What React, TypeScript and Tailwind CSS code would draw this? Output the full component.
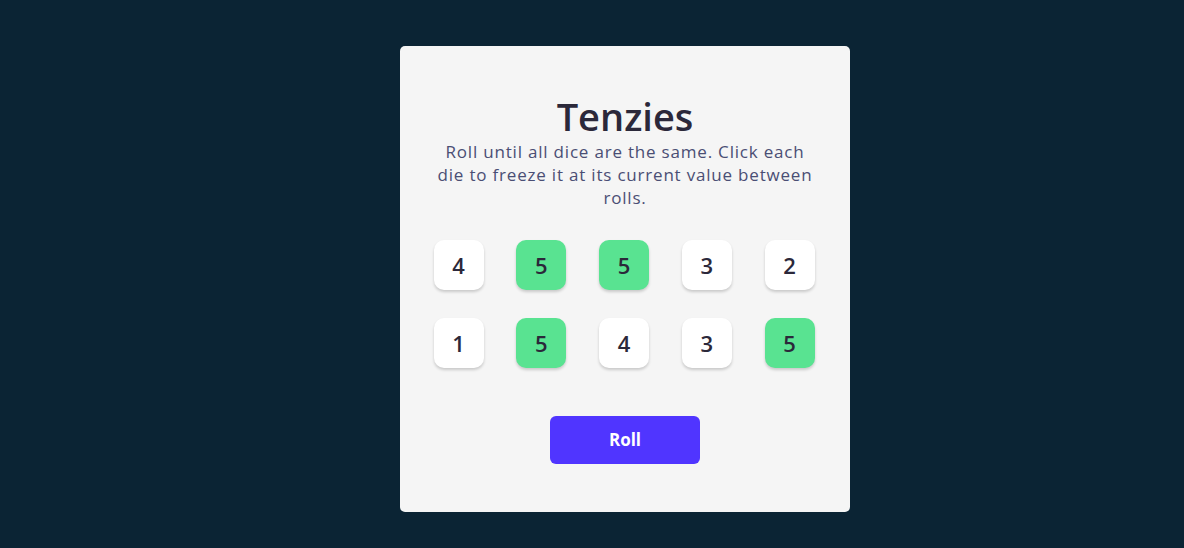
const DICE = [
  { value: 4, held: false },
  { value: 5, held: true },
  { value: 5, held: true },
  { value: 3, held: false },
  { value: 2, held: false },
  { value: 1, held: false },
  { value: 5, held: true },
  { value: 4, held: false },
  { value: 3, held: false },
  { value: 5, held: true },
];

function Die({ value, held }: { value: number; held: boolean }) {
  return (
    <button
      type="button"
      className={`flex h-[50px] w-[50px] items-center justify-center rounded-[10px] text-[22px] font-semibold text-[#2B283A] shadow-[0_2px_3px_rgba(0,0,0,0.18)] ${
        held ? 'bg-[#59E391]' : 'bg-white'
      }`}
    >
      {value}
    </button>
  );
}

export default function App() {
  return (
    <div className="flex min-h-[548px] w-full items-start justify-center bg-[#0B2434] pt-[46px] pl-[66px] font-['Open_Sans',sans-serif]">
      <main className="flex h-[466px] w-[450px] flex-col items-center rounded-[5px] bg-[#F5F5F5] pt-[50px]">
        <h1 className="text-[38px] leading-[40px] font-semibold text-[#2B283A]">
          Tenzies
        </h1>
        <p className="mt-[4px] w-[380px] text-center text-[17px] leading-[23px] tracking-[0.8px] text-[#4A4E74]">
          Roll until all dice are the same. Click each die to freeze it at its current value between rolls.
        </p>
        <div className="mt-[31px] mr-[2px] grid grid-cols-[repeat(5,50px)] gap-x-[32.75px] gap-y-[28px]">
          {DICE.map((d, i) => (
            <Die key={i} value={d.value} held={d.held} />
          ))}
        </div>
        <button
          type="button"
          className="mt-[48px] h-[48px] w-[150px] rounded-[6px] bg-[#5035FF] text-[17px] font-bold text-white"
        >
          Roll
        </button>
      </main>
    </div>
  );
}
